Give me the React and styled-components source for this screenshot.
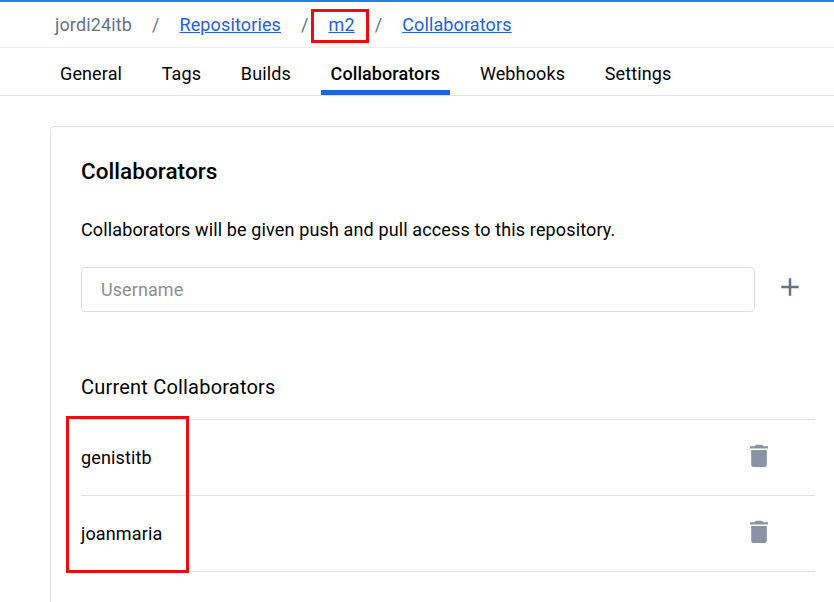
import React from "react";
import styled, { createGlobalStyle } from "styled-components";

const Global = createGlobalStyle`
  *, *::before, *::after { box-sizing: border-box; }
  body { margin: 0; background: #fff; overflow: hidden; }
  h1, h2, p, ul { margin: 0; padding: 0; font-weight: 400; }
`;

const Page = styled.div`
  width: 834px;
  height: 602px;
  overflow: hidden;
  border-top: 2px solid #1d83e6;
  font-family: Roboto, sans-serif;
  font-size: 18px;
  letter-spacing: 0.13px;
  color: #000;
`;

const Breadcrumbs = styled.nav`
  display: flex;
  align-items: center;
  height: 46px;
  padding-left: 55px;
  border-bottom: 1px solid #eceef1;
  color: #677285;
`;

const Crumb = styled.span`
  white-space: nowrap;
`;

const CrumbLink = styled.a`
  position: relative;
  color: #2560d8;
  text-decoration: underline;
  white-space: nowrap;
`;

const Slash = styled.span`
  width: 47.5px;
  text-align: center;
`;

const Mark = styled.span`
  position: absolute;
  left: ${(p) => p.$left}px;
  top: ${(p) => p.$top}px;
  width: ${(p) => p.$width}px;
  height: ${(p) => p.$height}px;
  border: 3px solid #ec0b10;
  list-style: none;
  pointer-events: none;
`;

const Tabs = styled.nav`
  display: flex;
  height: 48px;
  padding-left: 50px;
  gap: 19.7px;
  border-bottom: 1px solid #e1e2e6;
`;

const Tab = styled.a`
  display: flex;
  justify-content: center;
  padding: 15px 10px 0;
  line-height: 21px;
  white-space: nowrap;
  font-weight: ${(p) => (p.$active ? 500 : 400)};
  letter-spacing: ${(p) => (p.$active ? "0.08px" : "0.12px")};
  border-bottom: 5px solid ${(p) => (p.$active ? "#2560e0" : "transparent")};
`;

const Card = styled.main`
  margin: 30px 0 0 50px;
  width: 800px;
  height: 500px;
  padding: 30px;
  border: 1px solid #e1e2e6;
  border-radius: 4px;
`;

const Title = styled.h1`
  font-size: 22.5px;
  font-weight: 500;
  line-height: 28px;
  letter-spacing: 0.05px;
`;

const Intro = styled.p`
  margin-top: 34px;
  line-height: 22px;
`;

const AddRow = styled.form`
  display: flex;
  align-items: center;
  margin-top: 26px;
  gap: 25px;
`;

const Input = styled.input`
  width: 674px;
  height: 45px;
  padding: 0 19px;
  border: 1px solid #dcdee2;
  border-radius: 4px;
  font: inherit;
  letter-spacing: 0.08px;
  outline: none;
  &::placeholder { color: #8f8f8f; opacity: 1; }
`;

const Plus = styled.svg`
  width: 20px;
  height: 20px;
  margin-bottom: 5px;
`;

const Subtitle = styled.h2`
  margin-top: 63px;
  font-size: 20px;
  line-height: 24px;
  letter-spacing: 0.2px;
`;

const List = styled.ul`
  position: relative;
  width: 734px;
  margin-top: 20px;
  list-style: none;
  border-top: 1px solid #e1e2e6;
`;

const Row = styled.li`
  display: flex;
  align-items: center;
  justify-content: space-between;
  height: 76px;
  padding-right: 47px;
  border-bottom: 1px solid #e1e2e6;
`;

const Trash = styled.svg`
  width: 18px;
  height: 24px;
  margin-bottom: 4px;
`;

const tabs = ["General", "Tags", "Builds", "Collaborators", "Webhooks", "Settings"];
const users = ["genistitb", "joanmaria"];

export default function App() {
  return (
    <>
      <Global />
      <Page>
        <Breadcrumbs>
          <Crumb>jordi24itb</Crumb>
          <Slash>/</Slash>
          <CrumbLink>Repositories</CrumbLink>
          <Slash>/</Slash>
          <CrumbLink>m2<Mark $left={-17} $top={-5} $width={58} $height={34} /></CrumbLink>
          <Slash>/</Slash>
          <CrumbLink>Collaborators</CrumbLink>
        </Breadcrumbs>
        <Tabs>
          {tabs.map((t) => <Tab key={t} $active={t === "Collaborators"}>{t}</Tab>)}
        </Tabs>
        <Card>
          <Title>Collaborators</Title>
          <Intro>Collaborators will be given push and pull access to this repository.</Intro>
          <AddRow>
            <Input placeholder="Username" />
            <Plus viewBox="0 0 20 20"><path d="M10 1.3v17.4M1.3 10h17.4" stroke="#677285" strokeWidth="2.5" /></Plus>
          </AddRow>
          <Subtitle>Current Collaborators</Subtitle>
          <List>
            {users.map((u) => (
              <Row key={u}>
                {u}
                <Trash viewBox="0 0 18 24"><path d="M0 2.2h4.5Q5.5.8 7 .8h4q1.5 0 2.5 1.4H18v2.3H0zM1.2 6h15.6v14.8q0 2.2-2.2 2.200H3.4q-2.2 0-2.2-2.2z" fill="#8993a5" /></Trash>
              </Row>
            ))}
            <Mark as="li" $left={-15} $top={-4} $width={123} $height={157} />
          </List>
        </Card>
      </Page>
    </>
  );
}
